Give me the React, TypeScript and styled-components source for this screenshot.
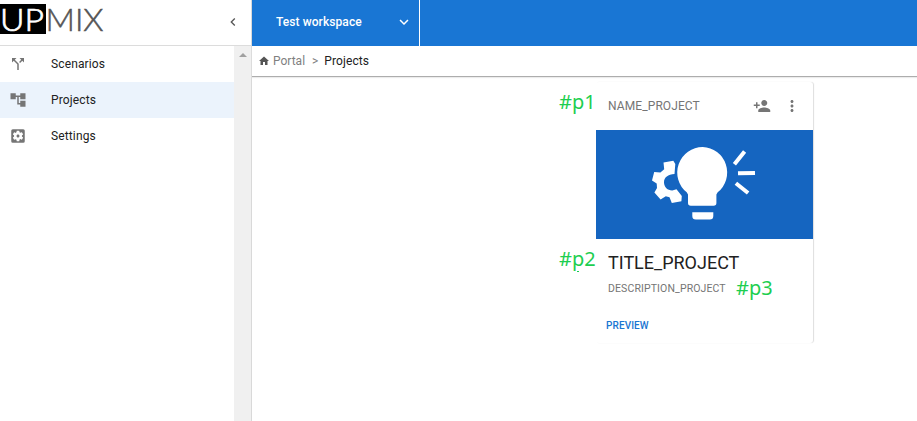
import React from "react";
import styled, { createGlobalStyle } from "styled-components";
import {
  MdAccountTree,
  MdCallSplit,
  MdChevronLeft,
  MdExpandMore,
  MdHome,
  MdMoreVert,
  MdPersonAdd,
  MdSettingsApplications,
} from "react-icons/md";

const GlobalStyle = createGlobalStyle`
  * { box-sizing: border-box; }
  body {
    margin: 0;
    background: #fff;
    color: #212121;
    font-family: Roboto, sans-serif;
    font-size: 12px;
    overflow: hidden;
  }
  svg { display: block; flex: none; }
`;

const Shell = styled.div`
  display: flex;
  width: 100%;
  height: 100vh;
`;

const Sidebar = styled.aside`
  display: flex;
  flex-direction: column;
  width: 252px;
  flex: none;
  border-right: 1px solid #d9d9d9;
`;

const SidebarHeader = styled.div`
  display: flex;
  align-items: flex-start;
  justify-content: space-between;
  height: 46px;
  border-bottom: 1px solid #dcdcdc;
`;

const CollapseButton = styled.button`
  display: flex;
  margin: 14px 10px 0 0;
  padding: 0;
  border: 0;
  background: none;
  color: #555;
`;

const SidebarBody = styled.div`
  display: flex;
  flex: 1;
`;

const Nav = styled.nav`
  flex: 1;
`;

const NavItem = styled.a<{ $active?: boolean }>`
  display: flex;
  align-items: center;
  gap: 24px;
  height: 36px;
  padding-left: 9px;
  background: ${(p) => (p.$active ? "#ebf3fc" : "transparent")};
  letter-spacing: 0.13px;

  svg { color: #757575; }
`;

const Scrollbar = styled.div`
  display: flex;
  justify-content: center;
  width: 17px;
  padding-top: 7px;
  background: #f0f0f0;
`;

const ScrollArrow = styled.div`
  width: 0;
  height: 0;
  border: 4px solid transparent;
  border-top: 0;
  border-bottom-color: #a0a0a0;
`;

const Main = styled.main`
  flex: 1;
  min-width: 0;
`;

const TopBar = styled.header`
  display: flex;
  height: 46px;
  background: #1976d4;
`;

const WorkspaceSelect = styled.div`
  display: flex;
  align-items: center;
  justify-content: space-between;
  width: 168px;
  padding: 0 6px 2px 24px;
  border-right: 1px solid #fff;
  color: #fff;
  font-weight: 500;
  letter-spacing: 0.08px;
`;

const Breadcrumbs = styled.div`
  display: flex;
  align-items: center;
  height: 31px;
  padding: 0 0 1px 6px;
  border-bottom: 1px solid #adadad;
  box-shadow: 0 1px 1px #ececec;
  color: #808080;

  svg { color: #555; margin-right: 3px; }
`;

const Separator = styled.span`
  margin: 0 6px 0 7px;
`;

const Current = styled.span`
  color: #212121;
  letter-spacing: 0.1px;
`;

const Content = styled.section`
  padding: 5px 0 0 344px;
`;

const Card = styled.article`
  position: relative;
  width: 217px;
  height: 261px;
  border-radius: 3px;
  box-shadow: 1px 0 1px #dedede;
`;

const CardHeader = styled.div`
  display: flex;
  align-items: center;
  height: 48px;
  padding: 0 12px;
  color: #757575;
`;

const ProjectName = styled.span`
  flex: 1;
  letter-spacing: 0.1px;
  color: #757575;
`;

const CardActions = styled.div`
  display: flex;
  gap: 12px;
`;

const Cover = styled.div`
  height: 109px;
  background: #1565c0;
`;

const CardBody = styled.div`
  padding: 13px 12px 0;
`;

const Title = styled.h2`
  margin: 0;
  font-size: 18px;
  line-height: 22px;
  font-weight: 400;
`;

const Description = styled.p`
  margin: 8px 0 0;
  font-size: 10.5px;
  line-height: 14px;
  letter-spacing: 0.12px;
  color: #757575;
`;

const PreviewButton = styled.button`
  display: block;
  margin: 23px 0 0 -2px;
  padding: 0;
  border: 0;
  background: none;
  color: #1976d2;
  font: 500 10px/13px Roboto, sans-serif;
  letter-spacing: 0.1px;
`;

const Annotation = styled.span<{ $x: number; $y: number }>`
  position: absolute;
  left: ${(p) => p.$x}px;
  top: ${(p) => p.$y}px;
  color: #1dce50;
  font: 400 20px/24px "Noto Sans", "Open Sans", sans-serif;
`;

const InkSpeck = styled.i`
  position: absolute;
  left: -19px;
  top: 189px;
  width: 2px;
  height: 1px;
  background: #1dce50;
`;

const Logo = () => (
  <svg width="106" height="46" viewBox="0 0 106 46" role="img" aria-label="UPMIX">
    <rect y="4" width="46" height="30" fill="#000" />
    <g fontFamily="Lato, sans-serif" fontSize="31" fontWeight="300">
      <text x="0" y="30.5" fill="#fff" stroke="#fff" strokeWidth=".7" textLength="44" lengthAdjust="spacingAndGlyphs">UP</text>
      <text x="45.5" y="30.5" fill="#555" stroke="#555" strokeWidth=".5" textLength="58" lengthAdjust="spacingAndGlyphs">MIX</text>
    </g>
  </svg>
);

const IdeaArt = () => (
  <svg width="217" height="109" viewBox="0 0 217 109" fill="#fff">
    <path d="M67.5 32.6l9.8-1.8 2 3.2-.8 10c-6.5.2-10.500 3.500-10.500 8.200 0 5 3.800 8.300 8.300 8.200l4.200-1.200 5.300 6.800-.4 5.200-9.600 1.800-2.300-5.800-3.700-1-5.200 3.400-6.200-7 2.600-4.500-.3-4.500-4.700-3 2.200-8.700 6.200.7 3.800-3.400z" />
    <path d="M106.7 17a25.500 25.500 0 0 0-16 45.300l1.300 2.200v8.500q0 2.800 2.800 2.800h22.800q2.800 0 2.800-2.800v-8.500l1.300-2.200A25.500 25.500 0 0 0 106.700 17z" fill="#fff" stroke="#1565c0" strokeWidth="3" paintOrder="stroke" />
    <path d="M96.3 82.3h21v3.700q0 3.500-3.500 3.500h-14q-3.500 0-3.500-3.500z" />
    <path d="M138.400 34.300l10.200-12.800M142 43.300l17-.4M139.900 53.300l12.200 9.700" stroke="#fff" strokeWidth="4" />
  </svg>
);

const navItems = [
  { label: "Scenarios", Icon: MdCallSplit },
  { label: "Projects", Icon: MdAccountTree, active: true },
  { label: "Settings", Icon: MdSettingsApplications },
];

export default function App() {
  return (
    <>
      <GlobalStyle />
      <Shell>
        <Sidebar>
          <SidebarHeader>
            <Logo />
            <CollapseButton aria-label="Collapse sidebar">
              <MdChevronLeft size={16} />
            </CollapseButton>
          </SidebarHeader>
          <SidebarBody>
            <Nav>
              {navItems.map(({ label, Icon, active }) => (
                <NavItem key={label} $active={active}>
                  <Icon size={18} />
                  {label}
                </NavItem>
              ))}
            </Nav>
            <Scrollbar>
              <ScrollArrow />
            </Scrollbar>
          </SidebarBody>
        </Sidebar>
        <Main>
          <TopBar>
            <WorkspaceSelect>
              Test workspace
              <MdExpandMore size={18} />
            </WorkspaceSelect>
          </TopBar>
          <Breadcrumbs>
            <MdHome size={12} />
            Portal
            <Separator>&gt;</Separator>
            <Current>Projects</Current>
          </Breadcrumbs>
          <Content>
            <Card>
              <CardHeader>
                <ProjectName>NAME_PROJECT</ProjectName>
                <CardActions>
                  <MdPersonAdd size={18} />
                  <MdMoreVert size={18} />
                </CardActions>
              </CardHeader>
              <Cover>
                <IdeaArt />
              </Cover>
              <CardBody>
                <Title>TITLE_PROJECT</Title>
                <Description>DESCRIPTION_PROJECT</Description>
                <PreviewButton>PREVIEW</PreviewButton>
              </CardBody>
              <Annotation $x={-37} $y={8}>#p1</Annotation>
              <Annotation $x={-37} $y={165}>#p2</Annotation>
              <Annotation $x={140} $y={194}>#p3</Annotation>
              <InkSpeck />
            </Card>
          </Content>
        </Main>
      </Shell>
    </>
  );
}
